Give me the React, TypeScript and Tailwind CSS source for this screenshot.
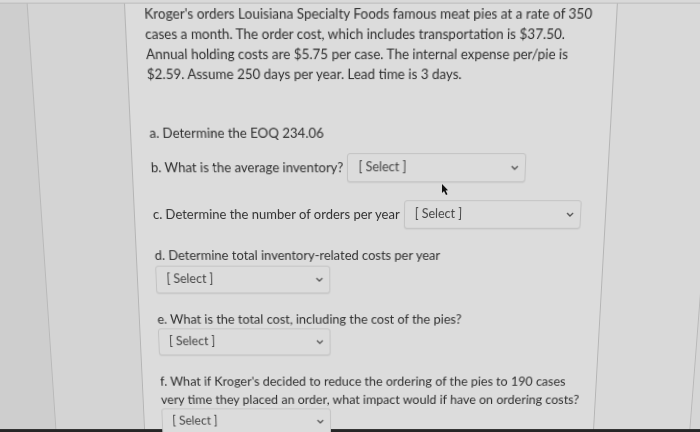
function Chevron() {
  return (
    <svg width="8" height="5" viewBox="0 0 8 5" className="shrink-0">
      <polyline points="1,1 4,4 7,1" fill="none" stroke="#555" strokeWidth="1.4" />
    </svg>
  );
}

function SelectBox() {
  return (
    <div className="flex h-[29px] w-[177px] shrink-0 items-center justify-between rounded-[3px] border border-[#c3c3c3] bg-[#dcdcdc] pl-[10px] pr-[6px] text-[12.5px] text-[#444] shadow-[0_1px_1px_rgba(0,0,0,0.06)]">
      <span>[ Select ]</span>
      <Chevron />
    </div>
  );
}

export default function App() {
  return (
    <div className="relative h-[432px] w-[700px] overflow-hidden bg-[#d4d4d4] font-['Lato',sans-serif] text-[#2f2f2f]">
      {/* photo of a screen: the page plane is tilted away at the bottom */}
      <div className="-ml-[40px] h-[480px] w-[780px] origin-[390px_216px] [transform:perspective(806px)_rotateX(-10deg)]">
        <div className="h-[9px] bg-[#d9d9d9]" />
        <div className="flex h-[434px] border-t border-[#bdbdbd]">
          <div className="w-[81px] shrink-0 bg-[#cecece]" />
          <div className="w-[93px] shrink-0 border-l border-[#b9b9b9] bg-[#d4d4d4]" />
          <div className="w-[472px] shrink-0 border-x border-[#b5b5b5] bg-[#dcdcdc] pl-[18px] text-[13px]">
            <p className="leading-[19px]">
              Kroger's orders Louisiana Specialty Foods famous meat pies at a rate of 350
              <br />
              cases a month. The order cost, which includes transportation is $37.50.
              <br />
              Annual holding costs are $5.75 per case. The internal expense per/pie is
              <br />
              $2.59. Assume 250 days per year. Lead time is 3 days.
            </p>
            <p className="mt-[38px] leading-[19px]">a. Determine the EOQ 234.06</p>
            <div className="mt-[10px] flex items-center gap-[4px]">
              <span className="leading-[19px]">b. What is the average inventory?</span>
              <SelectBox />
            </div>
            <div className="mt-[18px] flex items-center gap-[4px]">
              <span className="leading-[19px]">c. Determine the number of orders per year</span>
              <SelectBox />
            </div>
            <div className="mt-[18px]">
              <p className="leading-[19px]">d. Determine total inventory-related costs per year</p>
              <div className="mt-[1px]">
                <SelectBox />
              </div>
            </div>
            <div className="mt-[18px]">
              <p className="leading-[19px]">e. What is the total cost, including the cost of the pies?</p>
              <SelectBox />
            </div>
            <div className="mt-[18px]">
              <p className="leading-[20px]">
                f. What if Kroger's decided to reduce the ordering of the pies to 190 cases
                <br />
                very time they placed an order, what impact would if have on ordering costs?
              </p>
              <SelectBox />
            </div>
          </div>
          <div className="w-[101px] shrink-0 border-r border-[#b9b9b9] bg-[#d9d9d9]" />
          <div className="flex-1 bg-[#d6d6d6]" />
        </div>
        <div className="h-[40px] bg-[#262626]" />
      </div>
      <svg
        className="absolute left-[441px] top-[183px]"
        width="8"
        height="13"
        viewBox="0 0 8 13"
      >
        <path d="M1 1 L1 10 L3 8 L5 12 L6.5 11.3 L4.6 7.5 L7 7.3 Z" fill="#111" />
      </svg>
    </div>
  );
}
